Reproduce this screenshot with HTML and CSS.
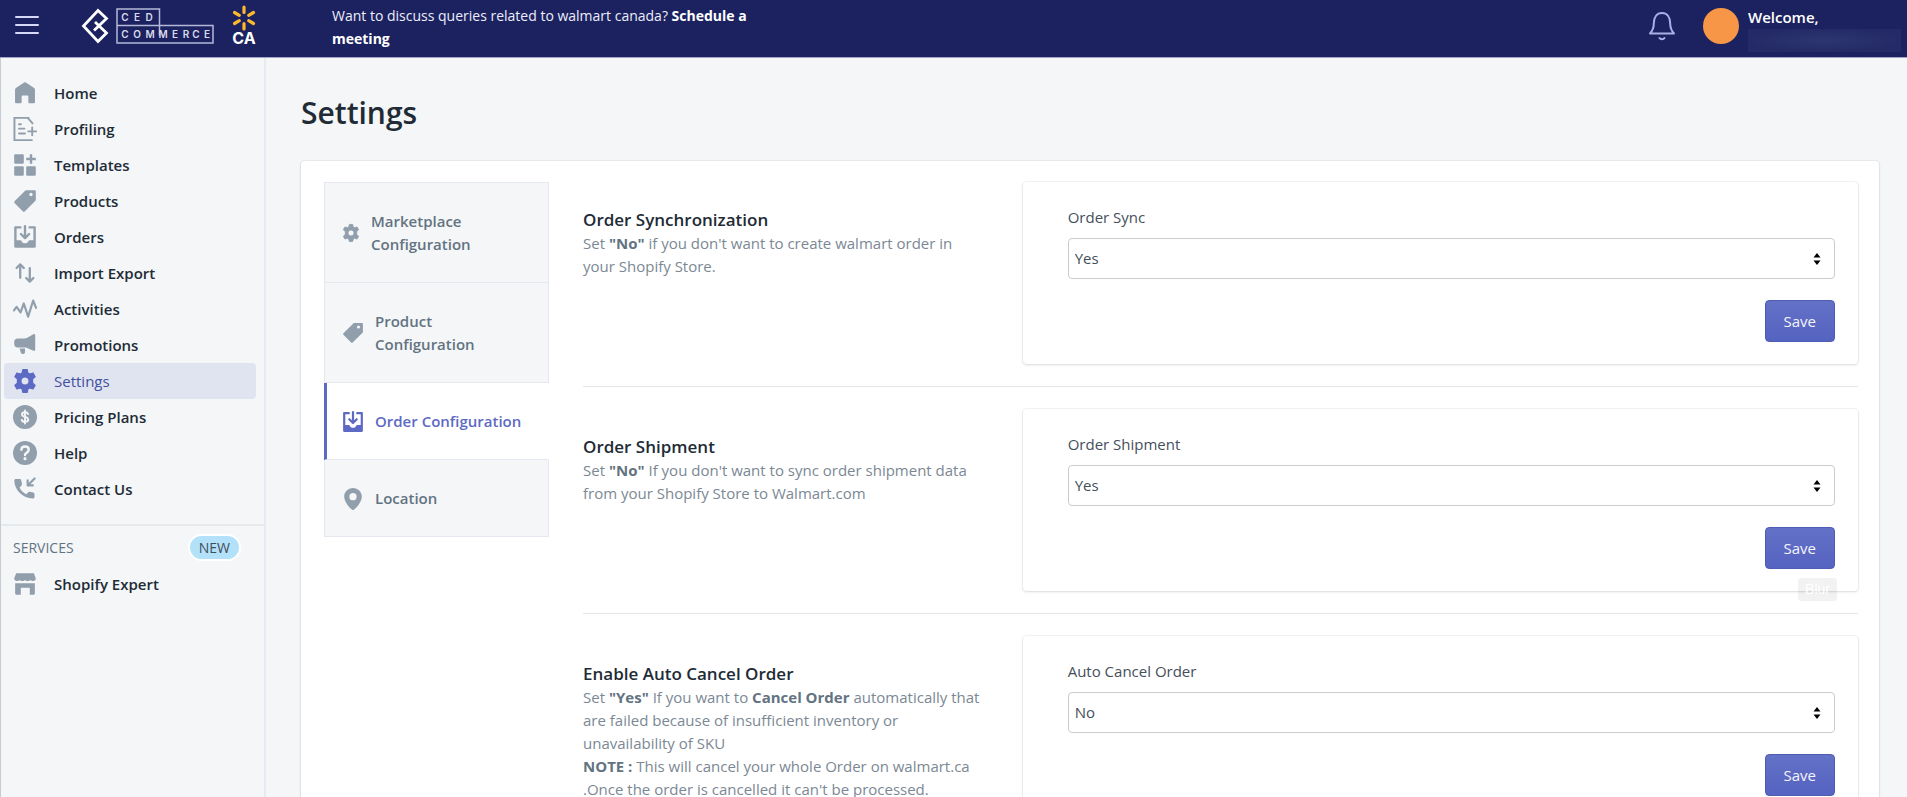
FILE: index.html
```html
<!DOCTYPE html>
<html lang="en">
<head>
<meta charset="utf-8">
<title>Settings</title>
<link rel="stylesheet" href="styles.css">
</head>
<body>
<svg class="sprite" aria-hidden="true">
  <symbol id="i-home" viewBox="0 0 20 20"><path d="M17.6 5.8 10.7 1.3a1.3 1.3 0 0 0-1.4 0L2.400 5.800C2 6.100 1.700 6.600 1.700 7.100V17.400c0 .7.5 1.200 1.200 1.200H6c.7 0 1.200-.5 1.200-1.200V13c0-.6.4-1 1-1h3.600c.6 0 1 .4 1 1v4.400c0 .7.5 1.200 1.200 1.200h3.100c.7 0 1.200-.5 1.200-1.200V7.100c0-.5-.3-1-.7-1.300z"/></symbol>
  <symbol id="i-profiling" viewBox="0 0 20 20"><path d="M13 .7H1.200v18.600H15.700M12.300.7l4 4.600" fill="none" stroke="currentColor" stroke-width="1.600" stroke-linecap="round"/><path d="M5 6h1.600M5 9.700h4.500M5 13.700h5M12.700 12h6.600M16 8.700v6.600" fill="none" stroke="currentColor" stroke-width="1.600" stroke-linecap="round"/></symbol>
  <symbol id="i-templates" viewBox="0 0 20 20"><rect x="1" y="1" width="8" height="8" rx="1"/><rect x="1" y="11" width="8" height="8" rx="1"/><rect x="11" y="11" width="8" height="8" rx="1"/><path d="M14 1h2v3h3v2h-3v3h-2V6h-3V4h3z"/></symbol>
  <symbol id="i-tag" viewBox="0 0 20 20"><path fill-rule="evenodd" d="M10.300 1.300c.2-.2.5-.3.700-.3h7c.6 0 1 .4 1 1v7c0 .3-.1.500-.3.700l-9 9a1 1 0 0 1-1.400 0l-7-7a1 1 0 0 1 0-1.400zM15 6a1.400 1.400 0 1 0 0-2.800A1.400 1.400 0 0 0 15 6z"/></symbol>
  <symbol id="i-orders" viewBox="0 0 20 20"><path fill-rule="evenodd" d="M2 1h5v2H3v9.800h3.200c.5 0 .9.300 1 .8.500 1.200 1.500 1.700 2.800 1.700s2.300-.5 2.800-1.700c.2-.5.6-.8 1-.8H17V3h-4V1h5c.6 0 1 .4 1 1v16c0 .6-.4 1-1 1H2c-.6 0-1-.4-1-1V2c0-.6.4-1 1-1z"/><path d="M10 1v9.500M6.600 7.500 10 10.900l3.400-3.400" fill="none" stroke="currentColor" stroke-width="2" stroke-linecap="round" stroke-linejoin="round"/></symbol>
  <symbol id="i-import" viewBox="0 0 20 20"><path d="M6 14V3M3 5.800l3-3 3 3M14 6v11M11 14.200l3 3 3-3" fill="none" stroke="currentColor" stroke-width="1.900" stroke-linecap="round" stroke-linejoin="round"/></symbol>
  <symbol id="i-activities" viewBox="0 0 20 20"><path d="M.8 11.200 3 8.200l3.300 4.600L9 5.400l3.600 11L16.800 3l2.400 6" fill="none" stroke="currentColor" stroke-width="1.800" stroke-linecap="round" stroke-linejoin="round"/></symbol>
  <symbol id="i-promotions" viewBox="0 0 20 20"><path d="M17.300.9a1 1 0 0 1 1.200 1v11.900a1 1 0 0 1-1.400.9l-5.300-2.300c-.7-.3-1.400-.4-2.100-.4H4a3 3 0 0 1-3-3V7.500a3 3 0 0 1 3-3h5.400c1 0 2-.3 2.800-.8z"/><path d="M5.500 13h4.500v2.900c0 1-.6 1.600-1.500 1.600H8c-.7 0-1.100-.4-1.400-1z"/></symbol>
  <symbol id="i-gear" viewBox="0 0 20 20"><path fill-rule="evenodd" d="M8.200.5h3.600l.7 2.900 1.300.8 2.900-.9 1.800 3.100-2.200 2v3.200l2.200 2-1.800 3.100-2.900-.9-1.300.8-.7 2.900H8.200l-.7-2.900-1.300-.8-2.900.9-1.800-3.100 2.200-2V8.400l-2.200-2 1.800-3.100 2.900.9 1.300-.8zM10 13.400a3.400 3.400 0 1 0 0-6.800 3.400 3.400 0 0 0 0 6.800z" stroke="currentColor" stroke-width="1" stroke-linejoin="round"/></symbol>
  <symbol id="i-dollar" viewBox="0 0 20 20"><circle cx="10" cy="10" r="10"/><path d="M12.600 7.600C12.300 6.700 11.300 6.100 10 6.100c-1.500 0-2.500.7-2.500 1.800 0 2.700 5.200 1.400 5.200 4.200 0 1.200-1.100 1.900-2.700 1.900-1.400 0-2.400-.6-2.700-1.600M10 4.600v10.800" fill="none" stroke="#f4f6f8" stroke-width="1.600" stroke-linecap="round"/></symbol>
  <symbol id="i-help" viewBox="0 0 20 20"><circle cx="10" cy="10" r="10"/><path d="M7 7.300C7.100 5.600 8.300 4.600 10 4.600c1.800 0 3.100 1.100 3.100 2.600 0 1.300-.8 1.900-1.700 2.500-.9.600-1.400 1-1.400 2" fill="none" stroke="#f4f6f8" stroke-width="2" stroke-linecap="round"/><circle cx="10" cy="14.700" r="1.300" fill="#f4f6f8"/></symbol>
  <symbol id="i-phone" viewBox="0 0 20 20"><path d="M1.100 3c0-.8.600-1.300 1.300-1.300h3.200c.6 0 1.100.4 1.200 1l.7 3.200c.1.500-.1.900-.4 1.200L5.500 8.700c1.100 2.600 3 4.500 5.600 5.600l1.600-1.600c.3-.3.800-.5 1.200-.4l3 .6c.6.100 1 .6 1 1.200v2.600c0 .7-.6 1.300-1.300 1.300C8.500 18.100 1.100 11 1.100 3z"/><path d="M18 1.200l-5.400 5.400M12.200 2.800V7h4.300" fill="none" stroke="currentColor" stroke-width="1.800" stroke-linecap="round" stroke-linejoin="round"/></symbol>
  <symbol id="i-store" viewBox="0 0 20 20"><path d="M2.600 1h14.800L19 5.500c0 1.300-.9 2.100-2.200 2.100-1.100 0-1.700-.4-2.300-1-.6.600-1.200 1-2.300 1-1 0-1.600-.4-2.200-1-.6.600-1.200 1-2.200 1-1.100 0-1.700-.4-2.300-1-.6.600-1.200 1-2.300 1C1.900 7.600 1 6.800 1 5.500zM1.800 9.300h16.400V18c0 .6-.4 1-1 1H14v-5.800H6.500V19H2.800c-.6 0-1-.4-1-1z"/></symbol>
  <symbol id="i-pin" viewBox="0 0 20 20"><path fill-rule="evenodd" d="M10 0C5.600 0 2 3.500 2 7.800 2 13 7.400 18.600 9.300 19.800c.4.300 1 .3 1.400 0C12.600 18.600 18 13 18 7.800 18 3.500 14.400 0 10 0zm0 11.200a3.300 3.300 0 1 1 0-6.600 3.300 3.300 0 0 1 0 6.600z"/></symbol>
  <symbol id="i-sort" viewBox="0 0 10 14"><path d="M1.500 5.500 5 1l3.500 4.500zM1.500 8.500 5 13l3.500-4.500z"/></symbol>
</svg>

<div class="app">
  <header class="topbar">
    <button class="menu-btn" type="button" aria-label="Menu"><span></span><span></span><span></span></button>
    <a class="logo" href="#" aria-label="CedCommerce">
      <svg width="134" height="37" viewBox="0 0 134 37">
        <path d="M13 22.500 25.500 10.500 17 2.500 2.500 18 17 33.500l8.500-8.500L14 14" fill="none" stroke="#fff" stroke-width="2.800"/>
        <path d="M36 1h42.500v16.500H132V35H36zM36 17.500h42.500M78.500 17.500v10" fill="none" stroke="#b4b9d8" stroke-width="1.500"/>
        <g class="logo-text"><text y="13" x="44 56 68">CED</text><text y="30" x="44 56 69 82 94 105 115 126">COMMERCE</text></g>
      </svg>
    </a>
    <div class="market">
      <svg width="26" height="26" viewBox="0 0 26 26"><path d="M13 2v5.500M13 18.500V24M3.500 7.500l4.800 2.800M17.700 15.700l4.800 2.800M3.500 18.500l4.800-2.800M17.700 10.300l4.800-2.800" stroke="#fdb92e" stroke-width="3.200" stroke-linecap="round"/></svg>
      <span>CA</span>
    </div>
    <p class="notice">Want to discuss queries related to walmart canada? <a href="#">Schedule a meeting</a></p>
    <button class="bell" type="button" aria-label="Notifications">
      <svg width="28" height="30" viewBox="0 0 28 30" fill="none" stroke="#a9afe6" stroke-width="2" stroke-linejoin="round" stroke-linecap="round"><path d="M2 22.500c2.800-3 3.800-5.500 3.800-10C5.800 6 9 2 14 2s8.200 4 8.200 10.500c0 4.500 1 7 3.800 10z"/><path d="M11.500 27c1 1.600 4 1.600 5 0"/></svg>
    </button>
    <div class="user">
      <span class="avatar"></span>
      <div class="user-text"><strong>Welcome,</strong><span class="user-name"></span></div>
    </div>
  </header>

  <div class="body">
    <nav class="sidebar">
      <ul class="nav">
        <li><a href="#"><svg class="icon"><use href="#i-home"/></svg>Home</a></li>
        <li><a href="#"><svg class="icon"><use href="#i-profiling"/></svg>Profiling</a></li>
        <li><a href="#"><svg class="icon"><use href="#i-templates"/></svg>Templates</a></li>
        <li><a href="#"><svg class="icon"><use href="#i-tag"/></svg>Products</a></li>
        <li><a href="#"><svg class="icon"><use href="#i-orders"/></svg>Orders</a></li>
        <li><a href="#"><svg class="icon"><use href="#i-import"/></svg>Import Export</a></li>
        <li><a href="#"><svg class="icon"><use href="#i-activities"/></svg>Activities</a></li>
        <li><a href="#"><svg class="icon"><use href="#i-promotions"/></svg>Promotions</a></li>
        <li><a href="#" class="current" aria-current="page"><svg class="icon"><use href="#i-gear"/></svg>Settings</a></li>
        <li><a href="#"><svg class="icon"><use href="#i-dollar"/></svg>Pricing Plans</a></li>
        <li><a href="#"><svg class="icon"><use href="#i-help"/></svg>Help</a></li>
        <li><a href="#"><svg class="icon"><use href="#i-phone"/></svg>Contact Us</a></li>
      </ul>
      <div class="services">
        <div class="services-head"><span>SERVICES</span><span class="badge">NEW</span></div>
        <ul class="nav">
          <li><a href="#"><svg class="icon"><use href="#i-store"/></svg>Shopify Expert</a></li>
        </ul>
      </div>
    </nav>

    <main class="main">
      <h1>Settings</h1>
      <div class="panel">
        <div class="tabs">
          <button type="button" class="tab"><svg class="icon small"><use href="#i-gear"/></svg><span>Marketplace Configuration</span></button>
          <button type="button" class="tab"><svg class="icon"><use href="#i-tag"/></svg><span>Product Configuration</span></button>
          <button type="button" class="tab active"><svg class="icon"><use href="#i-orders"/></svg><span>Order Configuration</span></button>
          <button type="button" class="tab"><svg class="icon"><use href="#i-pin"/></svg><span>Location</span></button>
        </div>
        <div class="sections">
          <section class="section">
            <div class="about">
              <h2>Order Synchronization</h2>
              <p>Set <b>"No"</b> if you don't want to create walmart order in your Shopify Store.</p>
            </div>
            <form class="card">
              <label for="sync">Order Sync</label>
              <div class="select"><select id="sync"><option>Yes</option><option>No</option></select><svg><use href="#i-sort"/></svg></div>
              <button type="button" class="save">Save</button>
            </form>
          </section>
          <section class="section">
            <div class="about">
              <h2>Order Shipment</h2>
              <p>Set <b>"No"</b> If you don't want to sync order shipment data from your Shopify Store to Walmart.com</p>
            </div>
            <form class="card">
              <label for="ship">Order Shipment</label>
              <div class="select"><select id="ship"><option>Yes</option><option>No</option></select><svg><use href="#i-sort"/></svg></div>
              <button type="button" class="save">Save</button>
              <span class="hint">Blur</span>
            </form>
          </section>
          <section class="section">
            <div class="about">
              <h2>Enable Auto Cancel Order</h2>
              <p>Set <b>"Yes"</b> If you want to <b>Cancel Order</b> automatically that are failed because of insufficient inventory or unavailability of SKU<br><b>NOTE :</b> This will cancel your whole Order on walmart.ca .Once the order is cancelled it can't be processed.</p>
            </div>
            <form class="card">
              <label for="cancel">Auto Cancel Order</label>
              <div class="select"><select id="cancel"><option>No</option><option>Yes</option></select><svg><use href="#i-sort"/></svg></div>
              <button type="button" class="save">Save</button>
            </form>
          </section>
        </div>
      </div>
    </main>
  </div>
</div>
</body>
</html>
```
FILE: styles.css
```css
* { box-sizing: border-box; }

body {
  margin: 0;
  font: 15px/23px "Open Sans", "Noto Sans", sans-serif;
  color: #212b36;
  background: #f4f6f8;
}

h1, h2, p, ul { margin: 0; padding: 0; }
ul { list-style: none; }
a { color: inherit; text-decoration: none; }
button, select { font: inherit; cursor: pointer; }
.sprite { display: none; }

.app {
  height: 100vh;
  display: flex;
  flex-direction: column;
  overflow: hidden;
}

.topbar {
  flex: none;
  display: flex;
  align-items: flex-start;
  height: 58px;
  padding: 4px 6px 0 15px;
  background: #1c2260;
  border-bottom: 1px solid #a3a4c8;
  color: #fff;
}

.menu-btn {
  display: flex;
  flex-direction: column;
  gap: 6px;
  width: 24px;
  margin: 12px 42px 0 0;
  padding: 0;
  border: 0;
  background: none;
}
.menu-btn span { height: 2px; border-radius: 1px; background: #d5d9f5; }

.logo { display: flex; margin-top: 4px; }
.logo-text { font: 600 10px Inter, sans-serif; fill: #d8dbea; text-anchor: middle; }

.market {
  display: flex;
  flex-direction: column;
  align-items: center;
  width: 28px;
  margin: 1px 74px 0 15px;
  font: 700 16px/15px Inter, sans-serif;
}

.notice { width: 424px; font-size: 14px; color: #eceefa; }
.notice a { font-weight: 700; color: #fff; }

.bell { display: flex; margin: 7px 27px 0 auto; padding: 0; border: 0; background: none; }

.user { display: flex; gap: 9px; }
.avatar { width: 36px; height: 36px; margin-top: 4px; border-radius: 50%; background: #f79646; }
.user-text { width: 153px; display: flex; flex-direction: column; padding-top: 2px; }
.user-text strong { font-weight: 600; }
.user-name { height: 23px; background: radial-gradient(closest-side, #2e366f, #232a66); }

.body { flex: 1; min-height: 0; display: flex; }

.sidebar {
  flex: none;
  width: 266px;
  padding-top: 17px;
  border-left: 1px solid #c9cdd2;
  border-right: 2px solid #e8eaf3;
}
.nav a {
  display: flex;
  align-items: center;
  gap: 17px;
  height: 36px;
  margin: 0 8px 0 3px;
  padding-left: 9px;
  border-radius: 4px;
  font-weight: 600;
}
.nav a.current { background: #e0e4f1; color: #43509e; font-weight: 500; }
.icon { flex: none; width: 24px; height: 24px; fill: #919eab; color: #919eab; }
.nav .current .icon { fill: #5c6ac4; color: #5c6ac4; }

.services { margin-top: 17px; border-top: 2px solid #e6e9ec; }
.services-head {
  display: flex;
  align-items: center;
  justify-content: space-between;
  height: 40px;
  padding: 2px 23px 0 12px;
  font-size: 14px;
  font-weight: 500;
  color: #637381;
}
.badge {
  padding: 0 9px;
  border: 2px solid #fff;
  border-radius: 14px;
  background: #b4e1fa;
  color: #3f4e5a;
}

.main { flex: 1; min-width: 0; padding: 35px 28px 0 35px; }
h1 { font-size: 30px; line-height: 40px; font-weight: 600; }

.panel {
  display: grid;
  grid-template-columns: 225px minmax(0, 1fr);
  align-items: start;
  gap: 34px;
  margin-top: 28px;
  padding: 21px 21px 40px 23px;
  background: #fff;
  border-radius: 4px;
  box-shadow: 0 0 0 1px rgba(63, 63, 68, .05), 0 1px 3px rgba(63, 63, 68, .15);
}

.tabs { border-top: 1px solid #e5e8ef; }
.tab {
  display: flex;
  align-items: center;
  gap: 11px;
  width: 100%;
  padding: 27px 18px 26px 17px;
  border: 1px solid #e5e8ef;
  border-top: 0;
  background: #f4f6f8;
  color: #637381;
  font-weight: 600;
  text-align: left;
}
.tab .icon { width: 22px; height: 22px; }
.tab .icon.small { width: 18px; height: 20px; }
.tab.active {
  padding-left: 15px;
  border-left: 3px solid #5c6ac4;
  border-right-color: transparent;
  background: #fff;
  color: #5c6ac4;
}
.tab.active .icon { fill: #5c6ac4; color: #5c6ac4; }

.section {
  display: grid;
  grid-template-columns: minmax(0, 1fr) minmax(0, 2fr);
  gap: 22px;
}
.section + .section { margin-top: 22px; padding-top: 22px; border-top: 1px solid #e4e7eb; }
.about { padding: 26px 16px 0 0; color: #7b8894; }
.about b { color: #637381; }
h2 { font-size: 17px; line-height: 24px; font-weight: 600; color: #212b36; }

.card {
  position: relative;
  display: flex;
  flex-direction: column;
  padding: 24px 23px 22px 45px;
  border-radius: 4px;
  box-shadow: 0 0 0 1px rgba(63, 63, 68, .05), 0 1px 3px rgba(63, 63, 68, .15);
}
.card label { margin-bottom: 9px; color: #454f5b; }
.select { position: relative; }
.select select {
  display: block;
  width: 100%;
  height: 41px;
  padding: 0 6px;
  appearance: none;
  background: #fff;
  border: 1px solid #c9cccf;
  border-radius: 4px;
  color: #454f5b;
}
.select svg { position: absolute; right: 13px; top: 14px; width: 10px; height: 14px; pointer-events: none; }
.save {
  align-self: flex-end;
  height: 42px;
  margin-top: 21px;
  padding: 0 18px;
  background: linear-gradient(#6371c7, #5563c1);
  border: 1px solid #4f5bb5;
  border-radius: 4px;
  color: #f4f5fc;
  font-weight: 500;
}
.hint {
  position: absolute;
  right: 21px;
  bottom: -10px;
  padding: 0 7px;
  background: rgba(0, 0, 0, .05);
  border-radius: 3px;
  color: #fff;
  font: 14px/23px "Liberation Sans", sans-serif;
}
```
